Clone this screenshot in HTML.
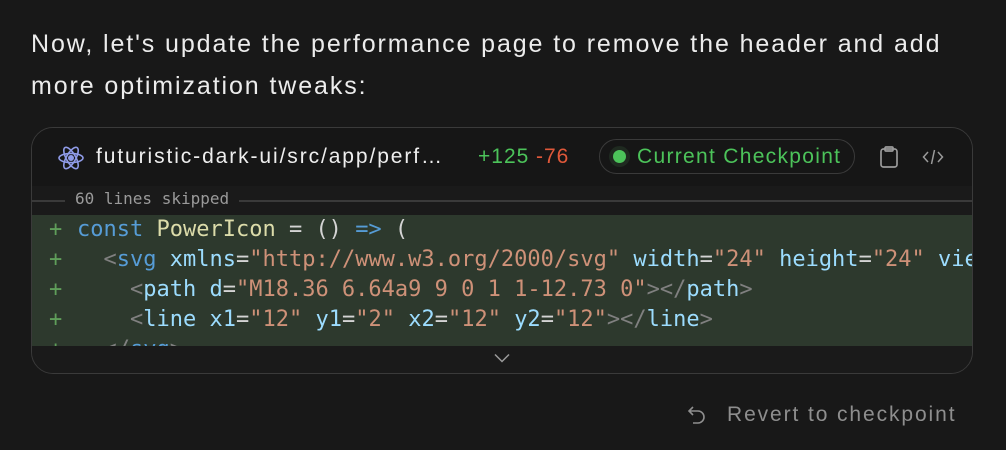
<!DOCTYPE html>
<html><head><style>
body{margin:0;width:1006px;height:450px;background:#181818;font-family:"Liberation Sans",sans-serif;overflow:hidden;position:relative;color:#e8e8e8}
.p{position:absolute;left:31px;top:23px;font-size:25px;letter-spacing:1.9px;line-height:42px;color:#ececec;width:960px}
.card{position:absolute;left:31px;top:127px;width:940px;height:245px;border:1.5px solid #3a3a3a;border-radius:22px;background:#1a1a1a;overflow:hidden}
.hdr{position:absolute;left:0;top:0;width:100%;height:58px;background:#161616}
.fn{position:absolute;left:64px;top:17px;font-size:21px;letter-spacing:1.9px;color:#eee}
.add{position:absolute;left:446px;top:17px;font-size:21px;letter-spacing:1px;color:#4cc35a}
.del{position:absolute;left:504px;top:17px;font-size:21px;letter-spacing:1px;color:#e0583a}
.pill{position:absolute;left:567px;top:11px;width:254px;height:33px;border:1.5px solid #3a3a3a;border-radius:18px}
.dot{position:absolute;left:13px;top:10px;width:13px;height:13px;border-radius:50%;background:#4cc35a;box-shadow:0 0 0 4px #1f2a20}
.pt{position:absolute;left:37px;top:5px;font-size:21px;letter-spacing:1.3px;color:#4cc35a}
.skip{position:absolute;left:0;top:72px;width:100%;height:1.5px;background:#3a3a3a}
.skt{position:absolute;left:33px;top:61px;padding:0 10px;background:#1a1a1a;font-family:"DejaVu Sans Mono",monospace;font-size:16px;color:#9a9a9a}
.diff{position:absolute;left:0;top:87px;width:100%;height:131px;background:#2d392d}
.ln{position:absolute;left:45px;font-family:"DejaVu Sans Mono",monospace;font-size:22px;white-space:pre;color:#d4d4d4;line-height:30px}
.pl{position:absolute;left:17px;font-family:"DejaVu Sans Mono",monospace;font-size:22px;line-height:30px;color:#5f9e5a}
.k{color:#569cd6}.f{color:#dcdcaa}.s{color:#ce9178}.a{color:#9cdcfe}.t{color:#808080}
.rev{position:absolute;left:727px;top:403px;font-size:21px;letter-spacing:1.9px;color:#8e8e8e}
</style></head><body>
<div class="p">Now, let's update the performance page to remove the header and add more optimization tweaks:</div>
<div class="card">
<div class="hdr">
<svg style="position:absolute;left:25px;top:16px" width="28" height="28" viewBox="0 0 28 28" fill="none" stroke="#8f9be8" stroke-width="1.6"><ellipse cx="14" cy="14" rx="12" ry="4.6"/><ellipse cx="14" cy="14" rx="12" ry="4.6" transform="rotate(60 14 14)"/><ellipse cx="14" cy="14" rx="12" ry="4.6" transform="rotate(120 14 14)"/><circle cx="14" cy="14" r="2.2" fill="#8f9be8"/></svg>
<div class="fn">futuristic-dark-ui/src/app/perf…</div>
<div class="add">+125</div><div class="del">-76</div>
<div class="pill"><div class="dot"></div><div class="pt">Current Checkpoint</div></div>
<svg style="position:absolute;left:846px;top:17px" width="22" height="24" viewBox="0 0 22 24" fill="none" stroke="#9a9a9a" stroke-width="1.7"><rect x="3" y="4" width="16" height="18" rx="2.5"/><rect x="7" y="2" width="8" height="4" rx="1"/></svg>
<svg style="position:absolute;left:890px;top:19px" width="22" height="20" viewBox="0 0 22 20" fill="none" stroke="#9a9a9a" stroke-width="1.5"><path d="M6 5L1.5 10L6 15M16 5L20.5 10L16 15M12.5 3L9.5 17"/></svg>
</div>
<div class="skip"></div><div class="skt">60 lines skipped</div>
<div class="diff">
<div class="pl" style="top:0">+</div><div class="pl" style="top:30px">+</div><div class="pl" style="top:60px">+</div><div class="pl" style="top:90px">+</div><div class="pl" style="top:120px">+</div>
<div class="ln" style="top:0"><span class="k">const</span> <span class="f">PowerIcon</span> = () <span class="k">=&gt;</span> (</div>
<div class="ln" style="top:30px">  <span class="t">&lt;</span><span class="k">svg</span> <span class="a">xmlns</span>=<span class="s">"http://www.w3.org/2000/svg"</span> <span class="a">width</span>=<span class="s">"24"</span> <span class="a">height</span>=<span class="s">"24"</span> <span class="a">vie</span></div>
<div class="ln" style="top:60px">    <span class="t">&lt;</span><span class="a">path</span> <span class="a">d</span>=<span class="s">"M18.36 6.64a9 9 0 1 1-12.73 0"</span><span class="t">&gt;&lt;/</span><span class="a">path</span><span class="t">&gt;</span></div>
<div class="ln" style="top:90px">    <span class="t">&lt;</span><span class="a">line</span> <span class="a">x1</span>=<span class="s">"12"</span> <span class="a">y1</span>=<span class="s">"2"</span> <span class="a">x2</span>=<span class="s">"12"</span> <span class="a">y2</span>=<span class="s">"12"</span><span class="t">&gt;&lt;/</span><span class="a">line</span><span class="t">&gt;</span></div>
<div class="ln" style="top:120px">  <span class="t">&lt;/</span><span class="k">svg</span><span class="t">&gt;</span></div>
</div>
<div style="position:absolute;left:0;top:218px;width:100%;height:30px;background:#1a1a1a"></div>
<svg style="position:absolute;left:462px;top:225px" width="16" height="10" viewBox="0 0 16 10" fill="none" stroke="#9a9a9a" stroke-width="1.5"><path d="M1 1.5L8 8.5L15 1.5"/></svg>
</div>
<svg style="position:absolute;left:687px;top:404px" width="20" height="22" viewBox="0 0 20 22" fill="none" stroke="#8e8e8e" stroke-width="1.6"><path d="M6 3L2 7L6 11M2 7H11a6 6 0 0 1 0 12H6"/></svg>
<div class="rev">Revert to checkpoint</div>
</body></html>
